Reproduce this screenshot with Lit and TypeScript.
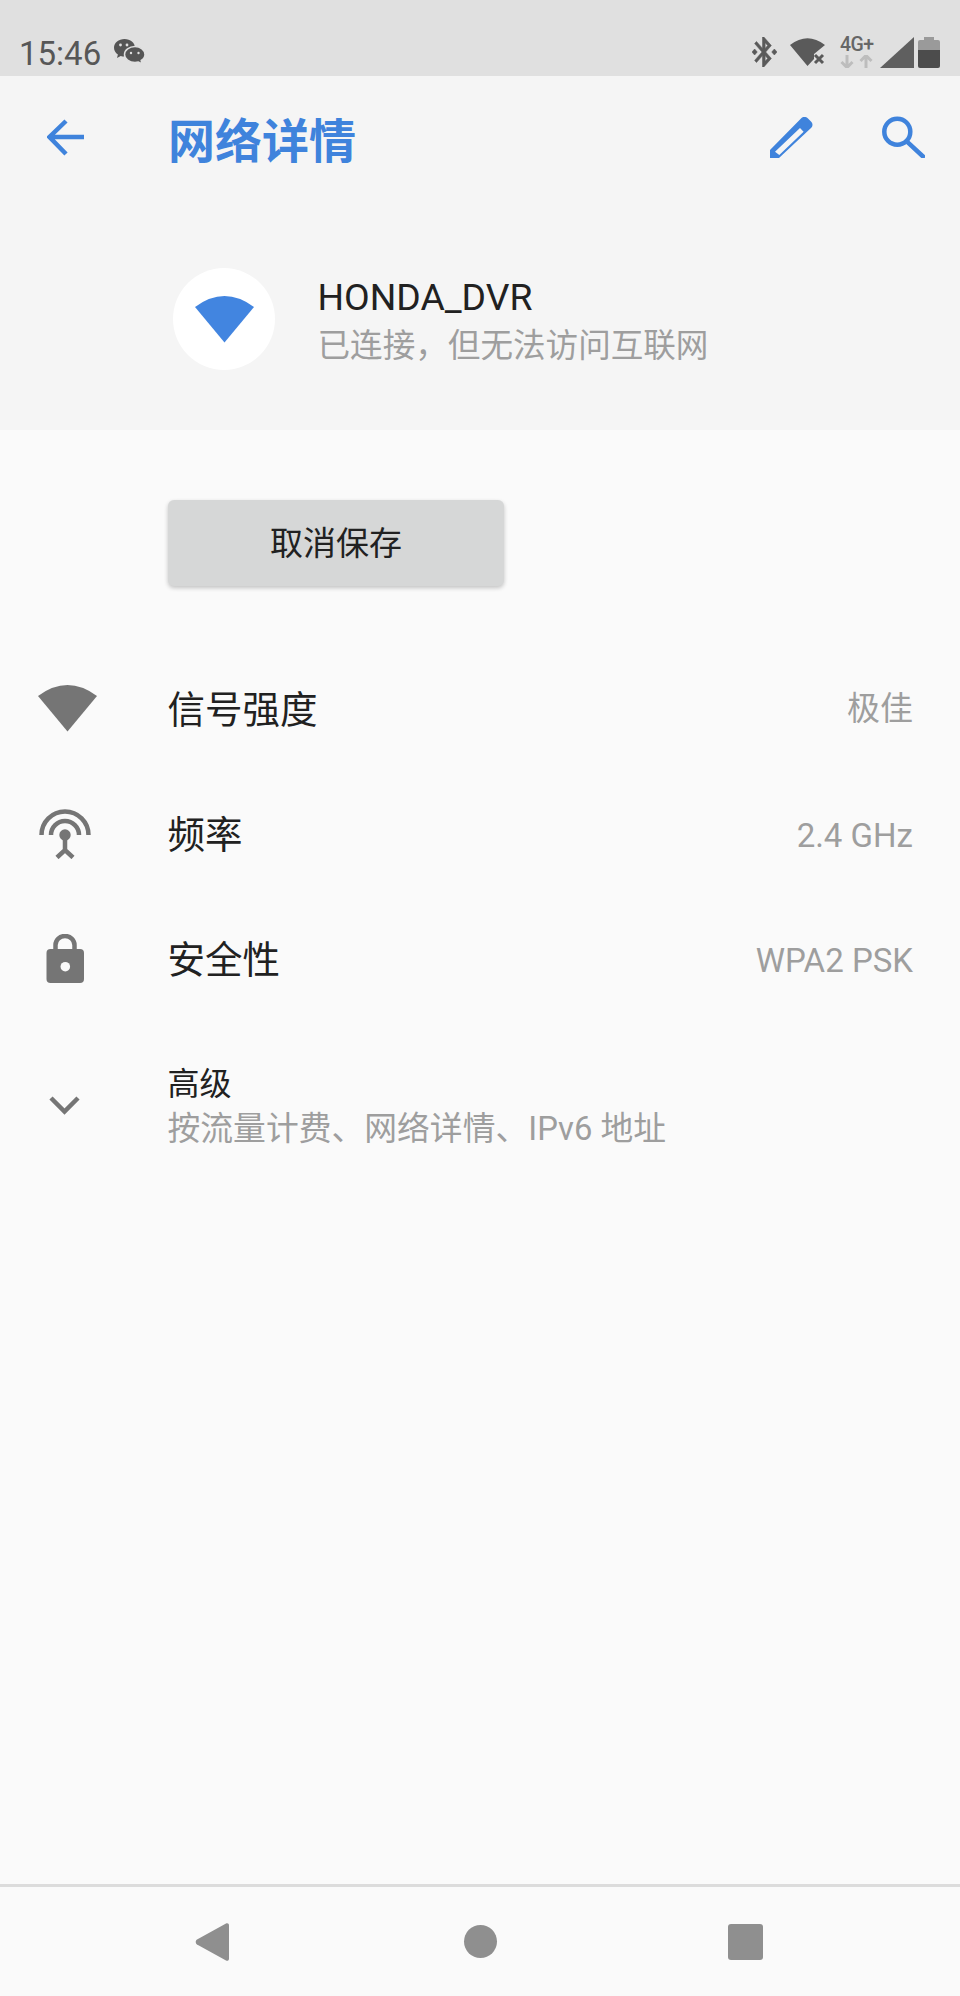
import { LitElement, html, css } from "lit";
import { customElement } from "lit/decorators.js";

@customElement("app-root")
export class AppRoot extends LitElement {
  static styles = css`
    :host { display: block; width: 960px; height: 1996px; background: #fafafa; overflow: hidden;
      font-family: Roboto, "Noto Sans CJK SC", sans-serif; color: #212121; }
    * { box-sizing: border-box; }
    svg { display: block; flex: none; }
    .page { display: flex; flex-direction: column; height: 100%; }
    .status { height: 76px; background: #e0e0e0; display: flex; align-items: flex-start; padding: 37px 20px 0 19px; flex: none; }
    .time { font-size: 33px; line-height: 32px; color: #575757; margin-top: 1px; }
    .wechat { margin: 2px 0 0 13px; }
    .sicons { margin-left: auto; display: flex; align-items: flex-start; }
    .s-wifi { margin-left: 13px; }
    .net { margin-left: 15px; width: 33px; display: flex; flex-direction: column; }
    .net span { font-size: 19.5px; font-weight: 500; line-height: 16px; height: 18px; color: #666; letter-spacing: -0.5px; white-space: nowrap; }
    .s-sig { margin-left: 7px; }
    .s-bat { margin-left: 4px; }
    .head { height: 354px; background: #f5f5f5; flex: none; display: flex; flex-direction: column; }
    .appbar { height: 122px; display: flex; align-items: center; padding: 0 35px 0 47px; flex: none; }
    .title { font-size: 47px; line-height: 60px; font-weight: 700; color: #3f83dc; margin: 10px 0 0 84px; }
    .act { margin-left: auto; }
    .act2 { margin-left: 69px; }
    .info { display: flex; align-items: flex-start; padding: 70px 0 0 173px; }
    .circle { width: 102px; height: 102px; border-radius: 50%; background: #fff; display: flex; align-items: center; justify-content: center; flex: none; }
    .names { margin: 5px 0 0 42.5px; display: flex; flex-direction: column; }
    .ssid { font-size: 37.3px; line-height: 48px; color: #212121; }
    .sub { font-size: 32.6px; line-height: 50px; color: #9e9e9e; }
    .btn { margin: 70px 0 60px 168px; width: 336px; height: 86px; border-radius: 6px; background: #d6d7d7;
      box-shadow: 0 2px 4px rgba(0,0,0,.22); display: flex; align-items: center; justify-content: center;
      font-size: 33px; color: #212121; flex: none; padding-bottom: 5px; }
    .row { height: 125px; display: flex; align-items: center; padding-right: 47px; flex: none; }
    .ic { width: 167.5px; flex: none; display: flex; }
    .label { font-size: 37.5px; color: #212121; margin-bottom: 4px; }
    .lift { margin-bottom: 5px; }
    .val { margin-left: auto; font-size: 33px; color: #9e9e9e; margin-top: 3px; }
    .val.cjk { margin-top: 0; margin-bottom: 6px; }
    .adv { height: 165px; }
    .chev { margin-top: 2px; }
    .advtext { display: flex; flex-direction: column; margin-top: 7px; }
    .advtitle { font-size: 32px; line-height: 44px; color: #212121; }
    .advsub { font-size: 32.8px; line-height: 46px; color: #9e9e9e; }
    .spacer { flex: 1; }
    .nav { height: 112px; border-top: 3px solid #dcdcdc; display: flex; align-items: center; padding-left: 195px; flex: none; }
    .dot { width: 33px; height: 33px; border-radius: 50%; background: #8f8f8f; margin-left: 235px; }
    .sq { width: 35px; height: 36px; border-radius: 3px; background: #8f8f8f; margin-left: 231px; }
  `;

  private wedge(color: string) {
    return html`<svg width="59" height="47" viewBox="0 0 59 47"><path d="M29.5 46.5 L0 11 Q29.5 -11 59 11 Z" fill=${color}></path></svg>`;
  }

  render() {
    return html`<div class="page">
      <div class="status">
        <span class="time">15:46</span>
        <svg class="wechat" width="31" height="25" viewBox="0 0 31 25">
          <path d="M10.5 0C4.7 0 0 3.9 0 8.8c0 2.8 1.5 5.2 3.9 6.8L3 19l3.7-2c1.2.4 2.4.6 3.8.6C16.3 17.6 21 13.7 21 8.8S16.3 0 10.5 0z" fill="#555"></path>
          <path d="M21 7.5c-5.8 0-10.5 3.6-10.5 8s4.7 8 10.5 8c1.2 0 2.3-.2 3.4-.5L28 25l-.8-3.5c2.3-1.5 3.8-3.6 3.8-6 0-4.4-4.5-8-10-8z" fill="#555" stroke="#e0e0e0" stroke-width="1.5"></path>
          <circle cx="6.5" cy="6" r="1.4" fill="#e0e0e0"></circle><circle cx="13" cy="6" r="1.4" fill="#e0e0e0"></circle>
          <circle cx="17" cy="14" r="1.2" fill="#e0e0e0"></circle><circle cx="24.5" cy="14" r="1.2" fill="#e0e0e0"></circle>
        </svg>
        <div class="sicons">
          <svg width="25" height="30" viewBox="3 2 19 20" preserveAspectRatio="none"><path fill="#5a5a5a" stroke="#5a5a5a" stroke-width=".4" d="M7 12l-2-2-2 2 2 2 2-2zm10.71-4.29L12 2h-1v7.59L6.41 5 5 6.41 10.59 12 5 17.59 6.41 19 11 14.41V22h1l5.71-5.71-4.3-4.29 4.3-4.29zM13 5.83l1.88 1.88L13 9.59V5.83zm1.88 10.46L13 18.17v-3.76l1.88 1.88z M20 10l-2 2 2 2 2-2-2-2z"></path></svg>
          <svg class="s-wifi" width="35" height="30" viewBox="0 0 35 30">
            <path d="M17.5 29 L0 8 Q17.5 -5.5 35 8 L24 17 V22 Z" fill="#5a5a5a"></path>
            <path d="M25 18 L33 26 M33 18 L25 26" stroke="#5a5a5a" stroke-width="3"></path>
          </svg>
          <div class="net">
            <span>4G+</span>
            <svg width="33" height="13" viewBox="0 0 33 13">
              <path d="M7 0V12 M1.5 7 L7 12.5 L12.5 7" fill="none" stroke="#bdbdbd" stroke-width="3"></path>
              <path d="M26 13V1 M20.5 6 L26 .5 L31.5 6" fill="none" stroke="#bdbdbd" stroke-width="3"></path>
            </svg>
          </div>
          <svg class="s-sig" width="34" height="31" viewBox="0 0 34 31"><path d="M0 31 L34 0 V31 Z" fill="#5f5f5f"></path></svg>
          <svg class="s-bat" width="22" height="31" viewBox="0 0 22 31">
            <path d="M6 0h10v3h4a2 2 0 0 1 2 2v8H0V5a2 2 0 0 1 2-2h4z" fill="#9a9a9a"></path>
            <path d="M0 13h22v16a2 2 0 0 1-2 2H2a2 2 0 0 1-2-2z" fill="#4c4c4c"></path>
          </svg>
        </div>
      </div>

      <div class="head">
        <div class="appbar">
          <svg width="37" height="37" viewBox="0 0 37 37"><path d="M37 18H3 M19 2 L2.5 18 L19 35" fill="none" stroke="#3f83dc" stroke-width="4.5"></path></svg>
          <span class="title">网络详情</span>
          <svg class="act" width="43" height="41" viewBox="0 0 43 41"><path fill-rule="evenodd" fill="#3f83dc" d="M0 41V33L31 1.5C33 -.5 36 -.3 38 1.5L41 4.5C43 6.500 43 9 41 11L9 41Z M5 34.700 L9.300 38 L33.600 14.700 L30 11Z"></path></svg>
          <svg class="act2" width="43" height="42" viewBox="0 0 43 42"><circle cx="15.300" cy="15.700" r="13" fill="none" stroke="#3f83dc" stroke-width="4.500"></circle><path d="M25 25.700 L41 40.500" stroke="#3f83dc" stroke-width="4.500" stroke-linecap="round"></path></svg>
        </div>
        <div class="info">
          <div class="circle">${this.wedge("#4285e0")}</div>
          <div class="names">
            <span class="ssid">HONDA_DVR</span>
            <span class="sub">已连接&#xFF0C;但无法访问互联网</span>
          </div>
        </div>
      </div>

      <div class="btn">取消保存</div>

      <div class="row">
        <div class="ic"><svg width="98" height="47" viewBox="-38 0 98 47"><path d="M29.500 46.500 L0 11 Q29.500 -11 59 11 Z" fill="#757575"></path></svg></div>
        <span class="label lift">信号强度</span><span class="val cjk">极佳</span>
      </div>
      <div class="row">
        <div class="ic"><svg width="91" height="50" viewBox="-39 0 91 50">
          <path d="M2.500 26 A23.500 23.500 0 0 1 49.500 26 M12 26 A14 14 0 0 1 40 26" fill="none" stroke="#757575" stroke-width="4.500"></path>
          <circle cx="26" cy="26" r="5.700" fill="#757575"></circle>
          <path d="M26 26V41 M18 48.500 L26 41 L34 48.500" fill="none" stroke="#757575" stroke-width="4.500"></path>
        </svg></div>
        <span class="label">频率</span><span class="val">2.4 GHz</span>
      </div>
      <div class="row">
        <div class="ic"><svg width="84" height="49" viewBox="-46 0 84 49">
          <path d="M9.500 16V11 a9.500 9 0 0 1 19 0V16" fill="none" stroke="#757575" stroke-width="4.500"></path>
          <rect x=".5" y="15" width="37.500" height="34" rx="4" fill="#757575"></rect>
          <circle cx="19.300" cy="32.700" r="4.800" fill="#fafafa"></circle>
        </svg></div>
        <span class="label">安全性</span><span class="val">WPA2 PSK</span>
      </div>
      <div class="row adv">
        <div class="ic"><svg class="chev" width="81" height="20" viewBox="-49 0 81 20"><path d="M2 3 L15.500 16.500 L29 3" fill="none" stroke="#757575" stroke-width="4.500"></path></svg></div>
        <div class="advtext">
          <span class="advtitle">高级</span>
          <span class="advsub">按流量计费、网络详情、IPv6 地址</span>
        </div>
      </div>

      <div class="spacer"></div>

      <div class="nav">
        <svg width="34" height="38" viewBox="0 0 34 38"><path d="M31 .500 C32.500 -.3 34 .5 34 2.500 V35.500 C34 37.500 32.500 38.300 31 37.500 L2 21.500 C.3 20.500 .3 17.500 2 16.500 Z" fill="#8f8f8f"></path></svg>
        <div class="dot"></div>
        <div class="sq"></div>
      </div>
    </div>`;
  }
}
